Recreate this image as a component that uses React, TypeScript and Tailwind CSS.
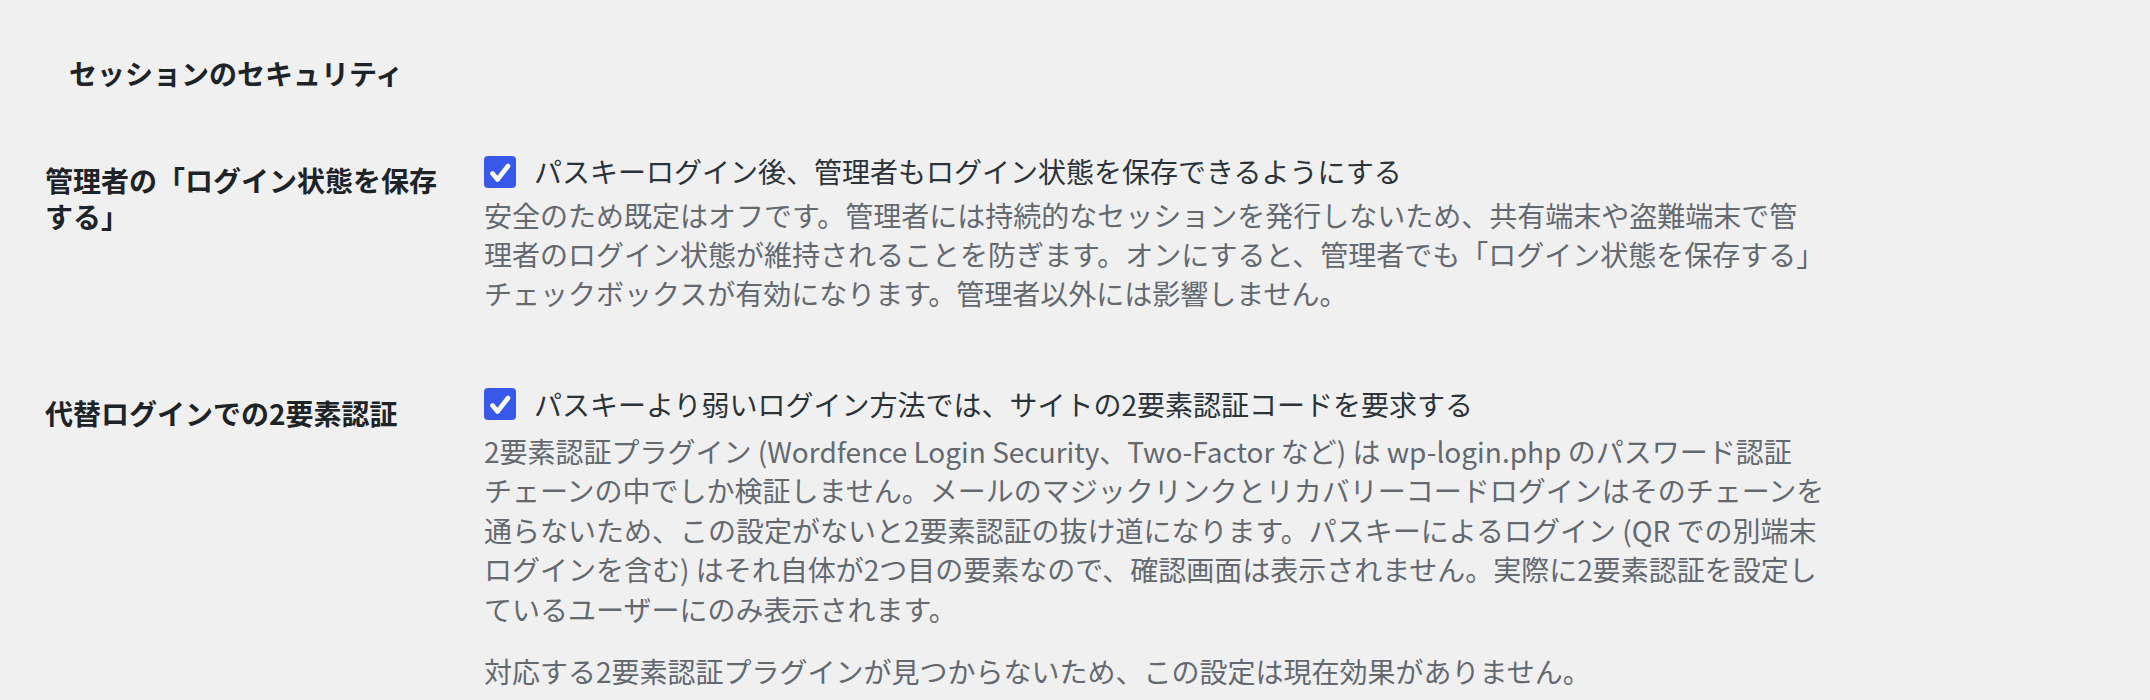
import React from 'react';

const CheckBox: React.FC = () => (
  <span className="flex h-8 w-8 shrink-0 items-center justify-center rounded-[4px] bg-[#3858e9]">
    <svg width="32" height="32" viewBox="0 0 32 32" fill="none">
      <path d="M8.5 17.5 L13.5 23.5 L24 10" stroke="#fff" strokeWidth="4.6" strokeLinecap="round" strokeLinejoin="round" />
    </svg>
  </span>
);

interface RowProps {
  label: React.ReactNode;
  option: string;
  children: React.ReactNode;
}

const SettingRow: React.FC<RowProps> = ({ label, option, children }) => (
  <div className="flex">
    <div className="w-[484px] shrink-0 pl-[45px] pr-[39px] pt-[40px] pb-[40px] text-[28px] font-bold leading-[36.4px] text-[#1d2327]">
      {label}
    </div>
    <div className="w-[1380px] shrink-0 pt-[30px] pb-[30px]">
      <label className="flex h-[39px] items-center gap-[18px] text-[28px] leading-[39px] text-[#2c3338]">
        <CheckBox />
        <span>{option}</span>
      </label>
      {children}
    </div>
  </div>
);

export default function App() {
  return (
    <div className="min-h-[700px] w-full overflow-hidden bg-[#f0f0f1] pt-[55px] font-['Noto_Sans_CJK_JP','Noto_Sans',sans-serif]">
      <h2 className="pl-[69px] text-[28px] font-bold leading-[36px] text-[#1d2327]">セッションのセキュリティ</h2>

      <div className="mt-[31px]">
        <SettingRow label="管理者の「ログイン状態を保存する」" option="パスキーログイン後、管理者もログイン状態を保存できるようにする">
          <p className="mt-[5px] whitespace-nowrap text-[28px] leading-[39.2px] text-[#646970]">
            安全のため既定はオフです。管理者には持続的なセッションを発行しないため、共有端末や盗難端末で管
            <br />
            理者のログイン状態が維持されることを防ぎます。オンにすると、管理者でも「ログイン状態を保存する」
            <br />
            チェックボックスが有効になります。管理者以外には影響しません。
          </p>
        </SettingRow>

        <div className="mt-[11px]">
          <SettingRow label="代替ログインでの2要素認証" option="パスキーより弱いログイン方法では、サイトの2要素認証コードを要求する">
            <p className="mt-[8px] whitespace-nowrap text-[28px] leading-[39.6px] text-[#646970]">
              2要素認証プラグイン (Wordfence Login Security、Two-Factor など) は wp-login.php のパスワード認証
              <br />
              チェーンの中でしか検証しません。メールのマジックリンクとリカバリーコードログインはそのチェーンを
              <br />
              通らないため、この設定がないと2要素認証の抜け道になります。パスキーによるログイン (QR での別端末
              <br />
              ログインを含む) はそれ自体が2つ目の要素なので、確認画面は表示されません。実際に2要素認証を設定し
              <br />
              ているユーザーにのみ表示されます。
            </p>
            <p className="mt-[22px] text-[28px] leading-[39.2px] text-[#646970]">
              対応する2要素認証プラグインが見つからないため、この設定は現在効果がありません。
            </p>
          </SettingRow>
        </div>
      </div>
    </div>
  );
}
